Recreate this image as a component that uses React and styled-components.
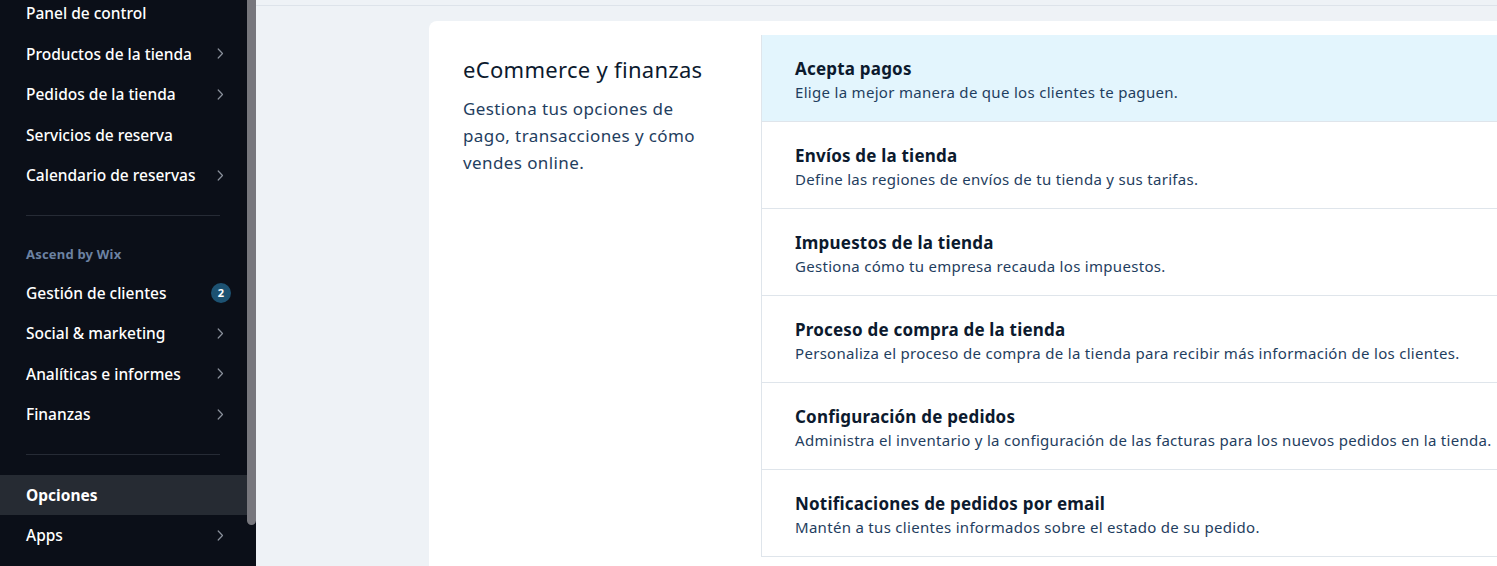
import React from "react";
import styled, { createGlobalStyle } from "styled-components";

const Global = createGlobalStyle`
  html, body { margin: 0; padding: 0; height: 100%; overflow: hidden; }
  body { font-family: "Noto Sans", "Open Sans", sans-serif; background: #eef2f6; }
  #root { height: 100%; }
`;

const Layout = styled.div`
  display: flex;
  height: 566px;
  width: 1497px;
  overflow: hidden;
`;

const SidebarWrap = styled.aside`
  display: flex;
  width: 256px;
  flex: 0 0 256px;
  background: #0b0f18;
  overflow: hidden;
`;

const Nav = styled.nav`
  flex: 1;
  display: flex;
  flex-direction: column;
  margin-top: -7px;
`;

const ScrollTrack = styled.div`
  width: 9px;
  flex: 0 0 9px;
  display: flex;
  flex-direction: column;
`;

const Thumb = styled.div`
  height: 525px;
  background: #77777d;
  border-radius: 0 0 5px 5px;
`;

const Item = styled.div`
  height: 40.5px;
  flex: 0 0 40.5px;
  display: flex;
  align-items: center;
  justify-content: space-between;
  padding: 0 23px 0 26px;
  color: #ffffff;
  font-size: 15.5px;
  font-weight: ${(p) => (p.$active ? 700 : 500)};
  background: ${(p) => (p.$active ? "#262b33" : "transparent")};
`;

const Divider = styled.div`
  padding: 19.5px 26px 19.5px 26px;
  &::after {
    content: "";
    display: block;
    height: 1px;
    background: #262b35;
    margin-right: 1px;
  }
`;

const GroupLabel = styled.div`
  height: 37px;
  display: flex;
  align-items: center;
  padding-left: 26px;
  color: #6c82a2;
  font-size: 13px;
  letter-spacing: 0.2px;
  font-weight: 700;
`;

const Badge = styled.span`
  width: 20px;
  height: 20px;
  border-radius: 50%;
  background: #1d5272;
  color: #fff;
  font-size: 11px;
  font-weight: 700;
  display: flex;
  align-items: center;
  justify-content: center;
  margin-right: -7px;
`;

const Chevron = () => (
  <svg width="7" height="11" viewBox="0 0 7 11" fill="none">
    <path d="M1.2 1L5.5 5.5L1.2 10" stroke="#8a909b" strokeWidth="1.2" strokeLinecap="round" strokeLinejoin="round" />
  </svg>
);

const Main = styled.main`
  flex: 1;
  display: flex;
  flex-direction: column;
  min-width: 0;
`;

const TopBar = styled.div`
  height: 5px;
  flex: 0 0 5px;
  background: #eef2f6;
  border-bottom: 1px solid #dde3ea;
`;

const Content = styled.div`
  flex: 1;
  padding: 15px 0 0 173px;
  overflow: hidden;
`;

const Card = styled.section`
  background: #ffffff;
  border-radius: 8px 0 0 0;
  display: grid;
  grid-template-columns: 332px 1fr;
  height: 600px;
  width: 1100px;
`;

const Intro = styled.div`
  padding: 34px 50px 0 34px;
`;

const Title = styled.h2`
  margin: 0;
  font-size: 22px;
  letter-spacing: 0.3px;
  line-height: 28px;
  font-weight: 400;
  color: #0c1a2e;
`;

const Desc = styled.p`
  margin: 12px 0 0 0;
  font-size: 17px;
  letter-spacing: 0.4px;
  line-height: 27px;
  color: #1f3e60;
`;

const List = styled.div`
  padding-top: 14px;
  display: flex;
  flex-direction: column;
`;

const Row = styled.div`
  box-sizing: border-box;
  height: 87px;
  flex: 0 0 87px;
  border-bottom: 1px solid #dfe5eb;
  border-left: 1px solid #dfe5eb;
  background: ${(p) => (p.$active ? "#e3f5fd" : "#ffffff")};
  padding: 22px 0 0 33px;
  display: flex;
  flex-direction: column;
`;

const RowTitle = styled.div`
  font-size: 17px;
  letter-spacing: 0.2px;
  font-weight: 700;
  line-height: 24px;
  color: #0c1a2e;
`;

const RowSub = styled.div`
  font-size: 15px;
  letter-spacing: 0.3px;
  line-height: 22px;
  color: #1f3e60;
  white-space: nowrap;
`;

const navTop = [
  { label: "Panel de control" },
  { label: "Productos de la tienda", chevron: true },
  { label: "Pedidos de la tienda", chevron: true },
  { label: "Servicios de reserva" },
  { label: "Calendario de reservas", chevron: true },
];

const navMid = [
  { label: "Gestión de clientes", badge: 2 },
  { label: "Social & marketing", chevron: true },
  { label: "Analíticas e informes", chevron: true },
  { label: "Finanzas", chevron: true },
];

const navBottom = [
  { label: "Opciones", active: true },
  { label: "Apps", chevron: true },
];

const rows = [
  { t: "Acepta pagos", s: "Elige la mejor manera de que los clientes te paguen.", active: true },
  { t: "Envíos de la tienda", s: "Define las regiones de envíos de tu tienda y sus tarifas." },
  { t: "Impuestos de la tienda", s: "Gestiona cómo tu empresa recauda los impuestos." },
  { t: "Proceso de compra de la tienda", s: "Personaliza el proceso de compra de la tienda para recibir más información de los clientes." },
  { t: "Configuración de pedidos", s: "Administra el inventario y la configuración de las facturas para los nuevos pedidos en la tienda." },
  { t: "Notificaciones de pedidos por email", s: "Mantén a tus clientes informados sobre el estado de su pedido." },
];

const NavItem = ({ item }) => (
  <Item $active={item.active}>
    <span>{item.label}</span>
    {item.chevron && <Chevron />}
    {item.badge && <Badge>{item.badge}</Badge>}
  </Item>
);

export default function App() {
  return (
    <>
      <Global />
      <Layout>
        <SidebarWrap>
          <Nav>
            {navTop.map((i) => <NavItem key={i.label} item={i} />)}
            <Divider />
            <GroupLabel>Ascend by Wix</GroupLabel>
            {navMid.map((i) => <NavItem key={i.label} item={i} />)}
            <Divider />
            {navBottom.map((i) => <NavItem key={i.label} item={i} />)}
          </Nav>
          <ScrollTrack>
            <Thumb />
          </ScrollTrack>
        </SidebarWrap>
        <Main>
          <TopBar />
          <Content>
            <Card>
              <Intro>
                <Title>eCommerce y finanzas</Title>
                <Desc>Gestiona tus opciones de pago, transacciones y cómo vendes online.</Desc>
              </Intro>
              <List>
                {rows.map((r) => (
                  <Row key={r.t} $active={r.active}>
                    <RowTitle>{r.t}</RowTitle>
                    <RowSub>{r.s}</RowSub>
                  </Row>
                ))}
              </List>
            </Card>
          </Content>
        </Main>
      </Layout>
    </>
  );
}
